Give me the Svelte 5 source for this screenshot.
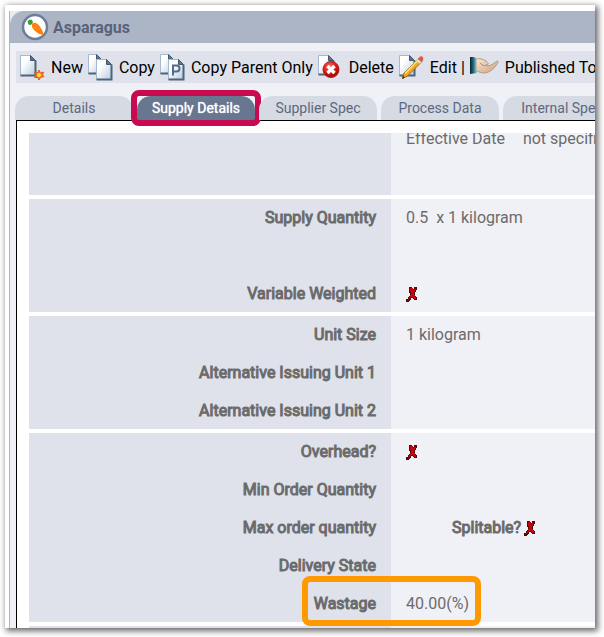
<script lang="ts">
  type Row = {
    label: string;
    value?: string;
    cross?: boolean;
    splitable?: boolean;
    marked?: boolean;
  };

  const actions = [
    { icon: 'new', label: 'New' },
    { icon: 'copy', label: 'Copy' },
    { icon: 'parent', label: 'Copy Parent Only' },
    { icon: 'delete', label: 'Delete' },
    { icon: 'edit', label: 'Edit' },
    { icon: 'hand', label: 'Published To' },
  ];

  const tabs = ['Details', 'Supply Details', 'Supplier Spec', 'Process Data', 'Internal Spec'];
  let activeTab = $state('Supply Details');

  const groups: Row[][] = [
    [
      { label: 'Supply Quantity', value: '0.5  x 1 kilogram' },
      { label: '' },
      { label: 'Variable Weighted', cross: true },
    ],
    [
      { label: 'Unit Size', value: '1 kilogram' },
      { label: 'Alternative Issuing Unit 1' },
      { label: 'Alternative Issuing Unit 2' },
    ],
    [
      { label: 'Overhead?', cross: true },
      { label: 'Min Order Quantity' },
      { label: 'Max order quantity', splitable: true },
      { label: 'Delivery State' },
      { label: 'Wastage', value: '40.00(%)', marked: true },
    ],
  ];
</script>

{#snippet cross()}
  <svg class="cross" viewBox="0 0 11 15" role="img" aria-label="No">
    <path d="M3 0H6V1H7V2H8V0H11V3H10V5H9V9H10V10H11V13H8V12H7V11H5V13H4V14H3V15H0V12H2V10H3V9H4V6H3Z" fill="#5c0508" />
    <path d="M4 1H7V3H8V2H10V3H9V5H8V8H9V10H10V12H8V11H7V10H5V11H4V12H3V13H2V12H3V10H4V8H5V5H4Z" fill="#c4060c" />
  </svg>
{/snippet}

{#snippet page(x: number, y: number, w: number, h: number)}
  <path
    d="M{x} {y}h{w - 5}l5 5v{h - 5}h{-w}z"
    fill="url(#paper)"
    stroke="#a5bad0"
  />
  <path d="M{x + w - 5} {y}v5h5z" fill="#5b7288" stroke="#405a70" />
  <path d="M{x} {y + h}h{w}v{5 - h}" fill="none" stroke="#4c657b" stroke-width="2" />
{/snippet}

<svg class="defs" width="0" height="0" aria-hidden="true">
  <defs>
    <linearGradient id="paper" x1="0" y1="0" x2="1" y2="1">
      <stop offset="0.3" stop-color="#fff" />
      <stop offset="1" stop-color="#b9cbe0" />
    </linearGradient>
    <radialGradient id="ball" cx="0.4" cy="0.3" r="0.7">
      <stop offset="0" stop-color="#ff6a60" />
      <stop offset="0.6" stop-color="#dc1712" />
      <stop offset="1" stop-color="#930b0b" />
    </radialGradient>
    <linearGradient id="sleeve">
      <stop offset="0" stop-color="#10202c" />
      <stop offset="0.45" stop-color="#17667f" />
      <stop offset="1" stop-color="#8fd4e6" />
    </linearGradient>
    <linearGradient id="skin" x1="0" y1="0" x2="1" y2="1">
      <stop offset="0" stop-color="#fae8d6" />
      <stop offset="1" stop-color="#c99f78" />
    </linearGradient>
  </defs>
</svg>

<div class="frame">
  <main class="window">
    <header>
      <svg class="logo" viewBox="0 0 28 28" aria-hidden="true">
        <circle cx="14" cy="14" r="12" fill="#fff" stroke="#6b7d99" stroke-width="2.5" />
        <path d="M11.500 10.500C14 8.500 16.500 10.500 18.500 13C20.500 16 23 20 22 21.500C20.500 22.500 16 20 13.500 17.500C11 15 10 12.500 11.500 10.500Z" fill="#ff7f0a" />
        <path d="M13 15l3-2M16 18l2-2" stroke="#ff9a3c" />
        <path d="M6.500 8.500L8.500 6.500L11 7L12 9.500L10 12L7.500 11.500Z" fill="#35a02c" />
      </svg>
      <h1>Asparagus</h1>
    </header>

    <div class="toolbar" role="toolbar" aria-label="Item actions">
      {#each actions as action}
        {#if action.icon === 'hand'}<span class="separator">|</span>{/if}
        <button type="button" class="action">
          <svg class="icon" class:wide={action.icon === 'hand'} viewBox={action.icon === 'hand' ? '0 0 30 28' : '0 0 26 28'} aria-hidden="true">
            {#if action.icon === 'new'}
              {@render page(1.5, 2.5, 15, 20)}
              <path d="M20 17l1.500 3 3-1-1 3 1.500 1.500-3.500 1-1.500 2.500-1.500-2.500-3 0 1.500-2.500-1.500-2.500 3 .500z" fill="#ef7b22" stroke="#dc5b20" />
              <circle cx="20" cy="22" r="2" fill="#ffe135" />
            {:else if action.icon === 'copy'}
              {@render page(1.5, 1.5, 13, 19)}
              {@render page(9.5, 6.5, 15, 20)}
            {:else if action.icon === 'parent'}
              {@render page(1.5, 1.5, 13, 19)}
              {@render page(9.5, 6.5, 15, 20)}
              <path d="M14 22.500V12.500H17.500A3 3 0 0 1 17.500 18.500H14" fill="none" stroke="#536b87" stroke-width="2" />
            {:else if action.icon === 'delete'}
              {@render page(1.5, 2.5, 15, 19)}
              <circle cx="14" cy="16.500" r="8" fill="url(#ball)" stroke="#b61b1a" />
              <path d="M10.500 13l7 7m0-7l-7 7" stroke="#fff" stroke-width="3.500" />
            {:else if action.icon === 'edit'}
              {@render page(1.5, 2.5, 15, 20)}
              <path d="M20.500 5.500l3.500 3L9.500 23l-5 2.500 1.500-5.500z" fill="#f6a81d" stroke="#9b6522" />
              <path d="M7 20.500L20 7" stroke="#ffe77b" stroke-width="1.500" />
              <path d="M20 6l2-2.500q2-1 3 1t-1 4z" fill="#dc5a47" />
              <path d="M19 7l3.500 3" stroke="#dce3ea" stroke-width="2" />
              <path d="M4 26l1-3 2 1.500z" fill="#352c28" />
            {:else}
              <path d="M1 4H5L8 6V20L1 21Z" fill="url(#sleeve)" />
              <path d="M7 6C10 5 14 6 17 8C20 10 20 12 17 12C19 14 23 12 28 8C30 8 29 10 28 11C25 16 20 20 15 20C11 20 9 18 7 18Z" fill="url(#skin)" stroke="#b39a84" />
              <path d="M11 10C14 13 16 13 18 12" fill="none" stroke="#b28b69" />
            {/if}
          </svg>
          {action.label}
        </button>
      {/each}
    </div>

    <div class="tabs" role="tablist">
      {#each tabs as tab}
        <button
          type="button"
          role="tab"
          class="tab"
          class:active={tab === activeTab}
          aria-selected={tab === activeTab}
          onclick={() => (activeTab = tab)}
        >
          {tab}
        </button>
      {/each}
    </div>

    <section class="panel">
      <dl class="group first">
        <div class="row scrolled">
          <dt></dt>
          <dd>Effective Date <span class="date">not specified</span></dd>
        </div>
      </dl>
      {#each groups as rows}
        <dl class="group">
          {#each rows as row}
            <div class="row" class:marked={row.marked}>
              <dt>{row.label}</dt>
              <dd>
                {#if row.value}{row.value}{/if}
                {#if row.cross}{@render cross()}{/if}
                {#if row.splitable}
                  <b class="splitable">Splitable?</b>{@render cross()}
                {/if}
              </dd>
            </div>
          {/each}
        </dl>
      {/each}
      <dl class="group last"></dl>
    </section>
  </main>
</div>

<style>
  :global(body) {
    background: #fff;
    overflow: hidden;
  }

  .defs {
    position: absolute;
  }

  .frame {
    box-sizing: border-box;
    height: calc(100vh - 14px);
    margin: 5px 9px 9px 5px;
    padding: 6px 0 0 4px;
    overflow: hidden;
    background: #fff;
    box-shadow: 2px 2px 6px 1px rgba(0, 0, 0, 0.6);
    font-family: Roboto, sans-serif;
    font-size: 16px;
    color: #6b6b6b;
  }

  .window {
    display: flex;
    flex-direction: column;
    box-sizing: border-box;
    height: 100%;
    border-left: 1px solid #acb5c5;
    background: #f0f1f6;
  }

  header {
    display: flex;
    align-items: center;
    gap: 4px;
    flex: none;
    height: 32px;
    padding-left: 11px;
    background: radial-gradient(circle at 14px 14px, transparent 13px, #e9edf0 15px) 0 0 / 12px 12px no-repeat #acb5c5;
  }

  .logo {
    width: 28px;
    height: 28px;
  }

  h1 {
    margin: 0;
    font-size: 16px;
    font-weight: 700;
    color: #58637a;
  }

  button {
    border: 0;
    font-family: inherit;
    white-space: nowrap;
    cursor: pointer;
  }

  .toolbar {
    display: flex;
    align-items: center;
    gap: 4px;
    flex: none;
    height: 32px;
    margin: 8px 0 0 6px;
    padding-left: 3px;
    overflow: hidden;
    background: #dfe2ea;
    color: #000;
  }

  .action {
    display: flex;
    align-items: center;
    flex: none;
    gap: 6px;
    padding: 0;
    background: none;
    font-size: 16px;
    color: #000;
  }

  .icon {
    width: 26px;
    height: 28px;
  }

  .icon.wide {
    width: 30px;
  }

  .tabs {
    display: flex;
    gap: 4px;
    flex: none;
    margin: 13px 0 0 5px;
  }

  .tab {
    position: relative;
    flex: none;
    width: 118px;
    height: 24px;
    padding: 0;
    border-radius: 14px 14px 0 0;
    background: #d5dae3;
    font-size: 14px;
    color: #5d6880;
  }

  .tab.active {
    background: #67778f;
    color: #fff;
    text-shadow: 0 0 1px #fff;
  }

  .tab.active::after {
    content: '';
    position: absolute;
    inset: -6px;
    border: 6px solid #c80a50;
    border-radius: 8px;
  }

  .panel {
    flex: 1;
    min-height: 0;
    margin-left: 6px;
    padding: 12px 0 0 12px;
    border-top: 1px solid #000;
    border-left: 1px solid #000;
    background: #fff;
  }

  .group {
    display: flex;
    flex-direction: column;
    gap: 1px;
    margin: 0 0 4px;
    background: linear-gradient(to right, #dfe2ea 362px, #f0f1f6 362px);
  }

  .group.first {
    height: 62px;
    overflow: hidden;
  }

  .group.last {
    height: 40px;
  }

  .row {
    position: relative;
    display: grid;
    grid-template-columns: 362px 1fr;
    align-items: center;
    height: 37px;
    white-space: nowrap;
  }

  .row.scrolled {
    height: 12px;
    line-height: 12px;
  }

  .row.marked::after {
    content: '';
    position: absolute;
    top: -9px;
    left: 273px;
    box-sizing: border-box;
    width: 179px;
    height: 50px;
    border: 6px solid #ff9900;
    border-radius: 8px;
  }

  /* regular letters thickened by their outline, narrower than the bold cut */
  dt,
  .splitable {
    font-weight: 400;
    -webkit-text-stroke: 1px #6b6b6b;
  }

  dt {
    padding-right: 15px;
    text-align: right;
  }

  dd {
    display: flex;
    align-items: center;
    margin: 0;
    padding-left: 15px;
    white-space: pre;
  }

  .date {
    margin-left: 14px;
  }

  .splitable {
    margin: 0 3px 0 46px;
  }

  .cross {
    width: 11px;
    height: 15px;
    margin-top: 2px;
  }
</style>
